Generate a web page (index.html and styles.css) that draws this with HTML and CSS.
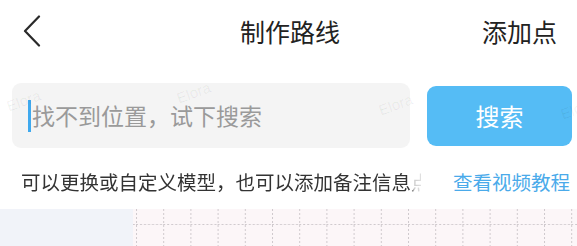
FILE: index.html
```html
<!DOCTYPE html>
<html lang="zh">
<head>
<meta charset="utf-8">
<title>制作路线</title>
<link rel="stylesheet" href="styles.css">
</head>
<body>
<div class="page">
  <header class="header">
    <div class="back">
      <svg width="18" height="32" viewBox="0 0 18 32"><polyline points="16,1.5 2,16 16,30.5" fill="none" stroke="#2a2a2a" stroke-width="2.2" stroke-linecap="round" stroke-linejoin="round"/></svg>
    </div>
    <div class="title">制作路线</div>
    <div class="action">添加点</div>
  </header>

  <div class="search-row">
    <div class="search-input">
      <span class="cursor"></span>
      <span class="placeholder">找不到位置，试下搜索</span>
    </div>
    <button class="search-btn">搜索</button>
  </div>

  <div class="hint-row">
    <div class="hint-clip"><span class="hint-text">可以更换或自定义模型，也可以添加备注信息点</span></div>
    <a class="hint-link">查看视频教程</a>
  </div>

  <div class="bottom">
    <div class="side-panel"></div>
    <div class="canvas">
      <svg class="grid" width="100%" height="100%">
        <defs>
          <pattern id="cell" x="3" y="0" width="27.2" height="40" patternUnits="userSpaceOnUse">
            <line x1="0.5" y1="0" x2="0.5" y2="40" stroke="#cfc9cd" stroke-width="1" stroke-dasharray="2 2"/>
            <line x1="0" y1="15.5" x2="27.2" y2="15.5" stroke="#cfc9cd" stroke-width="1" stroke-dasharray="2 2"/>
          </pattern>
        </defs>
        <rect width="100%" height="100%" fill="url(#cell)"/>
      </svg>
    </div>
  </div>

  <div class="watermarks">
    <span class="wm wm1">Elora</span>
    <span class="wm wm2">Elora</span>
    <span class="wm wm3">Elora</span>
    <span class="wm wm4">Elora</span>
  </div>
</div>
</body>
</html>
```

FILE: styles.css
```css
html, body {
  margin: 0;
  padding: 0;
  background: #ffffff;
}

body {
  font-family: "Noto Sans CJK SC", "Noto Sans", sans-serif;
  color: #222222;
}

.page {
  position: relative;
  width: 577px;
  height: 246px;
  overflow: hidden;
}

.header {
  display: grid;
  grid-template-columns: 1fr auto 1fr;
  align-items: center;
  height: 62px;
  padding: 0 20px 0 23px;
}

.back {
  display: flex;
  align-items: center;
}

.back svg {
  display: block;
}

.title {
  font-size: 25px;
  line-height: 1;
  color: #222222;
}

.action {
  justify-self: end;
  font-size: 25px;
  line-height: 1;
  color: #222222;
}

.search-row {
  display: flex;
  align-items: center;
  gap: 17px;
  margin-top: 21px;
  padding: 0 5px 0 12px;
  height: 65px;
}

.search-input {
  display: flex;
  align-items: center;
  width: 398px;
  height: 65px;
  box-sizing: border-box;
  padding-left: 16px;
  background: #f4f4f4;
  border-radius: 9px;
}

.cursor {
  width: 3px;
  height: 32px;
  background: #3fa9ee;
  margin-right: 1px;
}

.placeholder {
  font-size: 23px;
  line-height: 1;
  color: #9a9a9a;
}

.search-btn {
  width: 145px;
  height: 60px;
  border: none;
  border-radius: 9px;
  background: #55bcf5;
  color: #ffffff;
  font-family: "Noto Sans CJK SC", "Noto Sans", sans-serif;
  font-size: 24px;
  padding: 0;
}

.hint-row {
  display: flex;
  align-items: center;
  justify-content: space-between;
  height: 55px;
  padding: 6px 7px 0 10px;
}

.hint-clip {
  width: 411px;
  overflow: hidden;
  white-space: nowrap;
  -webkit-mask-image: linear-gradient(to right, rgba(0,0,0,0.2) 0, #000 8px, #000 402px, rgba(0,0,0,0.25) 404px, rgba(0,0,0,0.15) 411px);
  mask-image: linear-gradient(to right, rgba(0,0,0,0.2) 0, #000 8px, #000 402px, rgba(0,0,0,0.25) 404px, rgba(0,0,0,0.15) 411px);
}

.hint-text {
  display: inline-block;
  padding-left: 11px;
  font-size: 19.5px;
  line-height: 1.3;
  color: #333333;
}

.hint-link {
  font-size: 19.5px;
  line-height: 1.3;
  color: #4aaaea;
  white-space: nowrap;
}

.bottom {
  display: flex;
  height: 37px;
}

.side-panel {
  width: 133px;
  background: #f1f3f9;
}

.canvas {
  flex: 1;
  background: #fcf6f8;
}

.grid {
  display: block;
}

.watermarks {
  position: absolute;
  inset: 0;
  pointer-events: none;
}

.wm {
  position: absolute;
  font-family: "Liberation Sans", sans-serif;
  font-size: 15px;
  color: rgba(0, 0, 0, 0.06);
  transform: rotate(-20deg);
}

.wm1 { left: 6px; top: 92px; }
.wm2 { left: 176px; top: 84px; }
.wm3 { left: 378px; top: 96px; }
.wm4 { left: 560px; top: 100px; }
```
